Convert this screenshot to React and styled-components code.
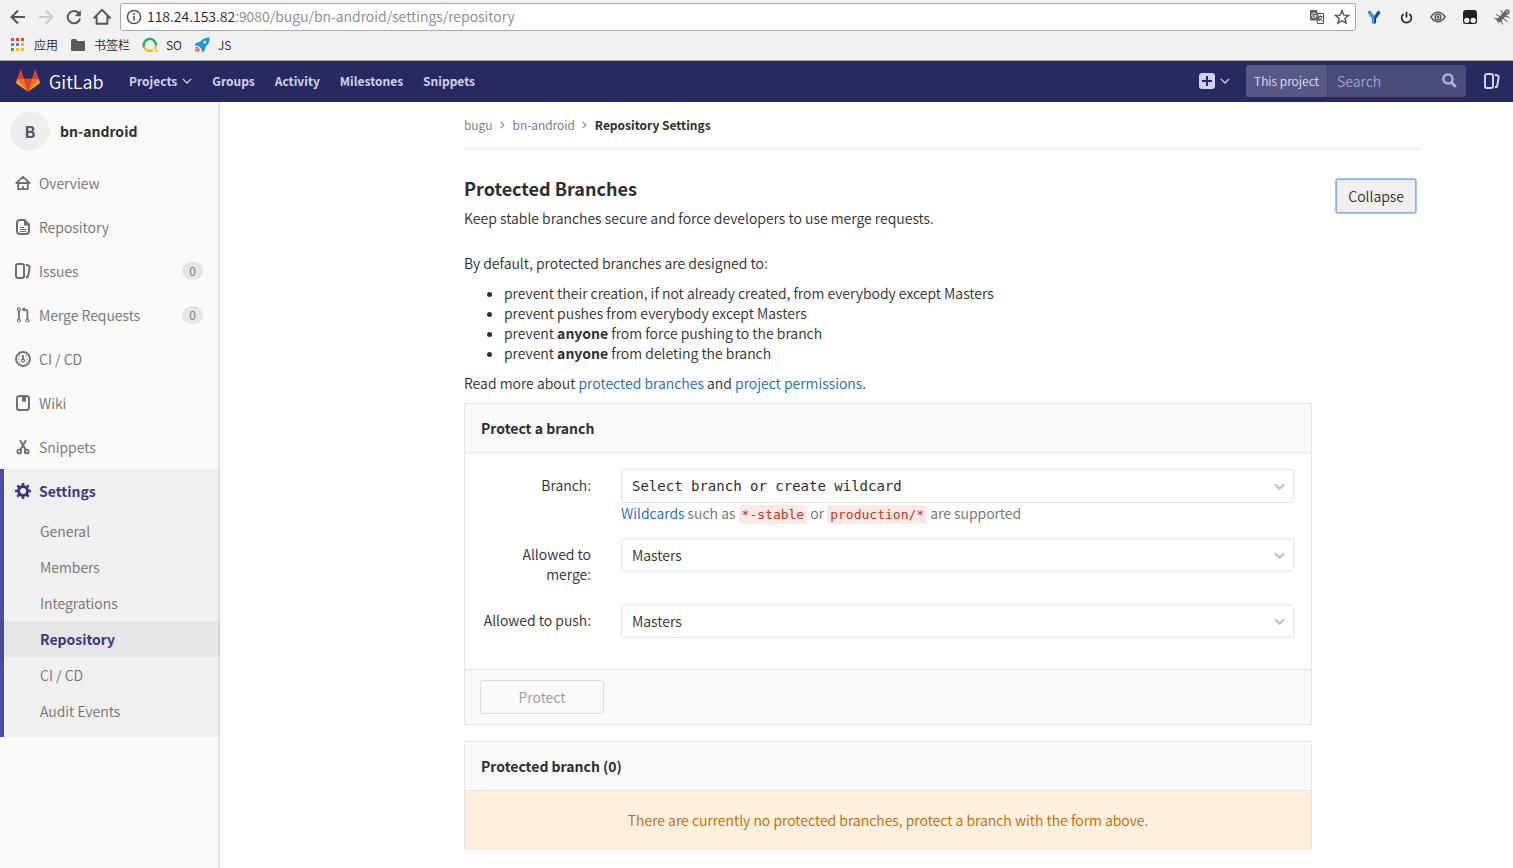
import React from 'react';
import styled, { createGlobalStyle } from 'styled-components';

const GlobalStyle = createGlobalStyle`
  *, *::before, *::after { box-sizing: border-box; }
  body {
    margin: 0;
    background: #fff;
    color: #2e2e2e;
    font-family: "Noto Sans CJK SC", "Noto Sans", sans-serif;
    font-size: 14px;
    font-weight: 350;
    line-height: 20px;
  }
  a { color: #1b69b6; text-decoration: none; }
  button, input, select { font: inherit; color: inherit; margin: 0; }
  strong { font-weight: 700; }
  svg { display: block; flex: none; }
`;

const Page = styled.div`
  min-height: 100vh;
  display: flex;
  flex-direction: column;
`;

/* ---------- browser bars ---------- */

const BrowserChrome = styled.div`
  background: #f1f1f1;
  border-bottom: 1px solid #aaa;
`;

const Toolbar = styled.div`
  display: flex;
  align-items: center;
  height: 34px;
  padding-left: 4px;
`;

const ToolButton = styled.button`
  display: flex;
  align-items: center;
  justify-content: center;
  width: 28px;
  height: 28px;
  padding: 0;
  border: 0;
  background: none;
  color: ${(p) => (p.$faded ? '#ccc' : '#555')};
`;

const NavButtons = styled.div`
  display: flex;
`;

const AddressBar = styled.div`
  flex: 1;
  display: flex;
  align-items: center;
  gap: 5px;
  height: 28px;
  margin-left: 4px;
  padding: 0 5px;
  border: 1px solid #a8a8a8;
  border-radius: 3px;
  background: #fff;
  color: #555;
`;

const Address = styled.div`
  flex: 1;
  padding-bottom: 2px;
  color: #888;
  line-height: 24px;
`;

const Host = styled.span`
  color: #222;
`;

const AddressIcons = styled.div`
  display: flex;
  gap: 9px;
`;

const Extensions = styled.div`
  display: flex;
  gap: 4px;
  padding-left: 4px;
  margin-right: -3px;
`;

const Bookmarks = styled.div`
  display: flex;
  align-items: center;
  height: 26px;
  padding: 0 10px 4px;
  gap: 12px;
`;

const Bookmark = styled.a`
  display: flex;
  align-items: center;
  gap: 8px;
  color: #222;
  font-size: 12px;
`;

/* ---------- application header ---------- */

const Header = styled.header`
  display: flex;
  align-items: center;
  height: 41px;
  padding: 0 13px 2px 16px;
  background: #292961;
  color: #d1d1f0;
`;

const Brand = styled.a`
  display: flex;
  align-items: center;
  gap: 9px;
  width: 113px;
  color: #fff;
  font-size: 18px;
`;

const MainNav = styled.nav`
  flex: 1;
  display: flex;
  gap: 20px;
`;

const NavLink = styled.a`
  display: flex;
  align-items: center;
  gap: 5px;
  color: #d1d1f0;
  font-size: 12px;
  font-weight: 700;
`;

const NewButton = styled.button`
  display: flex;
  align-items: center;
  gap: 5px;
  padding: 0;
  border: 0;
  background: none;
  margin-right: 16px;
`;

const SearchForm = styled.form`
  display: flex;
  align-items: center;
  width: 220px;
  height: 32px;
  padding-right: 9px;
  border-radius: 3px;
  overflow: hidden;
  background: #4b4b7c;
`;

const SearchScope = styled.label`
  width: 82px;
  padding-left: 8px;
  border-right: 1px solid #44447a;
  background: #585887;
  color: #e0e0f5;
  font-size: 12px;
  line-height: 32px;
  white-space: nowrap;
`;

const SearchInput = styled.input`
  flex: 1;
  min-width: 0;
  height: 32px;
  padding: 0 9px;
  border: 0;
  outline: 0;
  background: transparent;
  &::placeholder { color: #a6a6cd; opacity: 1; }
`;

const HeaderLink = styled.a`
  margin-left: 18px;
  color: #d1d1f0;
`;

/* ---------- sidebar ---------- */

const Body = styled.div`
  flex: 1;
  display: flex;
`;

const Sidebar = styled.aside`
  flex: none;
  width: 220px;
  background: #fafafa;
  box-shadow: inset -2px 0 0 #e5e5e5;
`;

const ProjectLink = styled.a`
  display: flex;
  align-items: center;
  gap: 10px;
  height: 59px;
  padding: 0 10px 2px;
  color: #2e2e2e;
  font-weight: 700;
`;

const Avatar = styled.span`
  width: 40px;
  height: 40px;
  border: 1px solid #f3f3f3;
  border-radius: 50%;
  background: #eee;
  color: #555;
  font-size: 16px;
  line-height: 38px;
  text-align: center;
`;

const MenuList = styled.ul`
  list-style: none;
  margin: 0;
  padding: 0;
`;

const MenuItem = styled.li`
  ${(p) => p.$active && `
    padding-bottom: 8px;
    background: rgba(0, 0, 0, 0.04);
    box-shadow: inset 4px 0 0 #4b4ba3;
  `}
`;

const MenuLink = styled.a`
  display: flex;
  align-items: center;
  gap: 8px;
  height: 44px;
  padding: 0 17px 0 15px;
  color: ${(p) => (p.$active ? '#393982' : '#707070')};
  font-weight: ${(p) => (p.$active ? 700 : 350)};
`;

const MenuText = styled.span`
  flex: 1;
`;

const Count = styled.span`
  width: 21px;
  border-radius: 9px;
  background: #e6e6e6;
  font-size: 12px;
  line-height: 18px;
  text-align: center;
`;

const SubLink = styled.a`
  display: block;
  padding-left: 40px;
  line-height: 36px;
  color: ${(p) => (p.$active ? '#393982' : '#707070')};
  font-weight: ${(p) => (p.$active ? 700 : 350)};
  background: ${(p) => (p.$active ? 'rgba(0, 0, 0, 0.04)' : 'none')};
`;

/* ---------- content ---------- */

const Main = styled.main`
  flex: 1;
  min-width: 0;
  padding: 0 92px 18px 244px;
`;

const Breadcrumbs = styled.nav`
  display: flex;
  align-items: center;
  gap: 7px;
  height: 47px;
  border-bottom: 1px solid #e5e5e5;
  font-size: 12px;
`;

const Crumb = styled.a`
  color: ${(p) => (p.$current ? '#2e2e2e' : '#707070')};
  font-weight: ${(p) => (p.$current ? 700 : 350)};
`;

const SectionHeader = styled.div`
  display: flex;
  justify-content: space-between;
  align-items: flex-start;
  padding: 26px 5px 0 0;
`;

const Title = styled.h4`
  margin: 0 0 7px;
  font-size: 18px;
  line-height: 26px;
`;

const Paragraph = styled.p`
  margin: 0 0 10px;
`;

const CollapseButton = styled.button`
  height: 34px;
  margin-top: 4px;
  padding: 0 11px;
  border: 1px solid #86aef0;
  border-radius: 2px;
  background: #f0f0f0;
  box-shadow: 0 0 0 1px #a3c4fb;
`;

const SectionContent = styled.div`
  max-width: 848px;
  margin-top: 15px;
`;

const Rules = styled.ul`
  margin: 0 0 10px;
  padding-left: 40px;
`;

const Panel = styled.section`
  margin-bottom: 16px;
  border: 1px solid #e5e5e5;
  border-radius: 2px;
`;

const PanelTitle = styled.h5`
  margin: 0;
  padding: 14px 16px;
  border-bottom: 1px solid #e5e5e5;
  background: #fafafa;
  font-size: 14px;
  line-height: 20px;
`;

const PanelBody = styled.div`
  padding: 16px 17px 16px 16px;
`;

const FormRow = styled.div`
  display: grid;
  grid-template-columns: 110px 1fr;
  column-gap: 30px;
  margin-bottom: 15px;
`;

const Label = styled.label`
  padding: 6px 0 5px;
  text-align: right;
`;

const SelectWrap = styled.div`
  position: relative;
`;

const Select = styled.select`
  appearance: none;
  display: block;
  width: 100%;
  height: 34px;
  padding: 0 24px 0 10px;
  border: 1px solid #e5e5e5;
  border-radius: 3px;
  background: #fff;
  ${(p) => p.$mono && 'font-family: "DejaVu Sans Mono", monospace;'}
`;

const SelectArrow = styled.svg`
  position: absolute;
  right: 9px;
  top: 14px;
  pointer-events: none;
`;

const Help = styled.div`
  color: #707070;
`;

const Code = styled.code`
  padding: 2px 3px;
  border-radius: 3px;
  background: #fbe9e7;
  color: #c0341d;
  font-family: "DejaVu Sans Mono", monospace;
  font-size: 13px;
  line-height: 1;
`;

const PanelFooter = styled.div`
  padding: 10px 15px;
  border-top: 1px solid #e5e5e5;
  background: #fafafa;
`;

const ProtectButton = styled.button`
  display: block;
  width: 124px;
  height: 34px;
  border: 1px solid #dcdcdc;
  border-radius: 3px;
  background: #fafafa;
  color: #999;
`;

const EmptyMessage = styled.p`
  margin: 0;
  padding: 19px 16px;
  background: #fff0de;
  color: #c26700;
  text-align: center;
`;

/* ---------- icons ---------- */

const Icon = ({ size = 16, children, ...rest }) => (
  <svg width={size} height={size} viewBox="0 0 16 16" fill="none" stroke="currentColor" strokeWidth="2" aria-hidden="true" {...rest}>
    {children}
  </svg>
);

const Chevron = () => (
  <svg width="10" height="6" viewBox="0 0 10 6" fill="none" stroke="currentColor" strokeWidth="1.3" aria-hidden="true">
    <path d="M.8.9 5 5 9.2.9" />
  </svg>
);

const CrumbArrow = () => (
  <svg width="6" height="8" viewBox="0 0 6 8" fill="none" stroke="#888" strokeWidth="1.1" aria-hidden="true">
    <path d="M.6.8 4 4 .6 7.2" />
  </svg>
);

const IssuesIcon = () => (
  <Icon fill="currentColor" stroke="none">
    <path d="M10.458 15.012l.311.055a3 3 0 0 0 3.476-2.433l1.389-7.879A3 3 0 0 0 13.2 1.28L11.23.933a3.002 3.002 0 0 0-.824-.031c.364.59.58 1.28.593 2.02l1.854.328a1 1 0 0 1 .811 1.158l-1.389 7.879a1 1 0 0 1-1.158.81l-.118-.02a3.98 3.98 0 0 1-.541 1.935zM3 0h4a3 3 0 0 1 3 3v10a3 3 0 0 1-3 3H3a3 3 0 0 1-3-3V3a3 3 0 0 1 3-3zm0 2a1 1 0 0 0-1 1v10a1 1 0 0 0 1 1h4a1 1 0 0 0 1-1V3a1 1 0 0 0-1-1H3z" />
  </Icon>
);

const HomeIcon = () => (
  <Icon strokeWidth="1.8" strokeLinejoin="round" strokeLinecap="round">
    <path d="M1.3 8 8 1.8 14.7 8zM3.2 8v6.2h9.6V8" />
    <path d="M8 11.3v2.4" strokeWidth="2" strokeLinecap="butt" />
  </Icon>
);

const DocIcon = () => (
  <Icon>
    <path d="M9.5 1H5a3 3 0 0 0-3 3v8a3 3 0 0 0 3 3h6a3 3 0 0 0 3-3V5.5z" strokeLinejoin="round" />
    <path d="M9 1v5.5h5z" fill="currentColor" stroke="none" />
    <path d="M5 8.5h4M5 10.5h6M5 12.5h6" strokeWidth="1" />
  </Icon>
);

const MergeIcon = () => (
  <Icon strokeWidth="1.2">
    <circle cx="3.9" cy="2.4" r="1.5" />
    <circle cx="3.9" cy="13.5" r="1.5" />
    <circle cx="12.4" cy="13.5" r="1.5" />
    <path d="M3.9 4v8" strokeWidth="1.8" />
    <path d="M9 2.6h1.4a2 2 0 0 1 2 2V12" strokeWidth="1.8" />
    <path d="M9.6 0v5L6.6 2.5z" fill="currentColor" stroke="none" />
  </Icon>
);

const PipelineIcon = () => (
  <Icon strokeWidth="1.8">
    <circle cx="8" cy="8" r="7" />
    <circle cx="8" cy="9.6" r="1.5" strokeWidth="1.2" />
    <path d="M8 4v4" strokeWidth="1.8" />
    <path d="M3 8h1.2M11.8 8H13M4.400 4.400l.9.9M11.600 4.400l-.9.9M4.400 11.600l.8-.8M11.600 11.600l-.8-.8" strokeWidth="1.1" />
  </Icon>
);

const WikiIcon = () => (
  <Icon>
    <rect x="2" y="1" width="12" height="14" rx="2.6" />
    <path d="M7 1.5h4v6L9 6 7 7.5z" fill="currentColor" stroke="none" />
  </Icon>
);

const SnippetIcon = () => (
  <Icon strokeWidth="1.9">
    <circle cx="4.3" cy="12.5" r="1.9" />
    <circle cx="11.7" cy="12.5" r="1.9" />
    <path d="M5 1.2 10.8 11M11 1.2 5.2 11" />
  </Icon>
);

const GearIcon = () => (
  <Icon>
    <circle cx="8" cy="8" r="4.5" strokeWidth="3" />
    <path d="M8 0v3M8 13v3M0 8h3M13 8h3M2.3 2.3l2 2M11.7 11.7l2 2M2.3 13.7l2-2M11.7 4.3l2-2" strokeWidth="2.6" />
  </Icon>
);

const Logo = () => (
  <svg width="24" height="23" viewBox="0 0 36 34" aria-hidden="true">
    <path fill="#e24329" d="M2 14 6.7 1q.5-1.2 1 0L12 14zM34 14 29.3 1q-.5-1.2-1 0L24 14z" />
    <path fill="#e24329" d="M18 34 12 14h12z" />
    <path fill="#fc6d26" d="M18 34 12 14H2zM18 34l6-20h10z" />
    <path fill="#fca326" d="M2 14 .2 19.5q-.3 1.3.8 2.2L18 34zM34 14l1.8 5.5q.3 1.3-.8 2.2L18 34z" />
  </svg>
);

const PlusIcon = () => (
  <svg width="16" height="16" viewBox="0 0 16 16" aria-hidden="true">
    <rect width="16" height="16" rx="3" fill="#d1d1f0" />
    <path d="M8 3v10M3 8h10" stroke="#292961" strokeWidth="2" />
  </svg>
);

const SearchIcon = () => (
  <Icon size={15} color="#b4b4d8" strokeWidth="2.4">
    <circle cx="6.3" cy="6.3" r="4.9" />
    <path d="m9.8 9.8 5 5" strokeWidth="3" />
  </Icon>
);

const InfoIcon = () => (
  <Icon strokeWidth="1.5">
    <circle cx="8" cy="8" r="6.6" />
    <path d="M8 7v4.5M8 4.3v1.7" strokeWidth="1.7" />
  </Icon>
);

const TranslateIcon = () => (
  <Icon strokeWidth="1">
    <path d="M7 4.5h7.5v10H8.5z" />
    <path d="M1 1h7l3 10.5H1z" fill="#666" stroke="none" />
    <path d="M7 5.2a2.2 2.2 0 1 0 .3 1.5H5.2" stroke="#fff" />
    <path d="M9.5 7.5h4M11.5 6.5v1M13 7.5q-.5 3-3 4.5M10.3 8.5q1 2.5 3 3.5" />
  </Icon>
);

const StarIcon = () => (
  <Icon strokeWidth="1.4">
    <path d="m8 1.6 1.8 4.5 4.8.3-3.7 3.1 1.2 4.8L8 11.7l-4.1 2.6 1.2-4.8-3.7-3.1 4.8-.3z" />
  </Icon>
);

const AppsIcon = () => {
  const colors = ['#ea4335', '#ea4335', '#ea4335', '#34a853', '#4285f4', '#fbbc05', '#34a853', '#fbbc05', '#fbbc05'];
  return (
    <svg width="16" height="14" viewBox="0 0 16 14" aria-hidden="true">
      {colors.map((c, i) => (
        <rect key={i} x={(i % 3) * 5 + 1} y={Math.floor(i / 3) * 5} width="3" height="3" fill={c} />
      ))}
    </svg>
  );
};

const FolderIcon = () => (
  <svg width="16" height="14" viewBox="0 0 16 14" aria-hidden="true">
    <path d="M1 2.5Q1 1 2.5 1H6l1.5 2H14q1 0 1 1v8q0 1-1 1H2q-1 0-1-1z" fill="#5a5a5a" />
  </svg>
);

const RingIcon = () => (
  <svg width="16" height="16" viewBox="0 0 16 16" fill="none" strokeWidth="2.4" aria-hidden="true">
    <path d="M1.9 10A6.2 6.2 0 1 1 14 8.5" stroke="#1fb259" />
    <path d="M1.9 10A6.2 6.2 0 0 0 11 13M14 8.5A6.2 6.2 0 0 1 12.5 12" stroke="#f6b92b" />
    <circle cx="14.5" cy="14" r="1.2" fill="#f6b92b" />
  </svg>
);

const RocketIcon = () => (
  <svg width="16" height="16" viewBox="0 0 17 16" aria-hidden="true">
    <path d="M16.5 0Q10 0 6.5 4.5L2.5 5.5.5 8.5l4 .2 3.5 3.5.2 3.8 3-2 1-4Q17 6 16.5 0z" fill="#1c96dc" />
    <circle cx="11.5" cy="5" r="1.5" fill="#d9f1ff" />
    <path d="M1.5 11.5 4 10M1 14.5l4-3M3.5 15.5 6 12.5" stroke="#e8604c" strokeWidth="1.5" />
  </svg>
);

const FunnelIcon = () => (
  <Icon stroke="none">
    <path d="M1.5 3 4 1.5 8 7l4-5.5L14.5 3 10 9.5V14l-2 1-2-1V9.5z" fill="#1668c4" />
    <path d="M3.5 3 7.300 8.800v5.200" stroke="#58b4f5" strokeWidth="1.3" />
    <path d="M13.500 3.500 9.400 9.300v4.700" stroke="#0b3567" strokeWidth="1.3" />
  </Icon>
);

const PowerIcon = () => (
  <Icon size={13} color="#222" strokeWidth="2">
    <path d="M4.5 3.5a6 6 0 1 0 7 0M8 1v7" />
  </Icon>
);

const EyeIcon = () => (
  <Icon strokeWidth="1.3">
    <path d="M.8 8Q8-1.500 15.200 8 8 17.500.8 8z" />
    <circle cx="8" cy="8" r="2.900" />
    <circle cx="8" cy="8" r=".8" fill="currentColor" />
  </Icon>
);

const MonkeyIcon = () => (
  <Icon stroke="none">
    <rect x="1" y="1" width="14" height="14" rx="3" fill="#222" />
    <circle cx="4.8" cy="11.3" r="2.6" fill="#fff" />
    <circle cx="11.2" cy="11.3" r="2.6" fill="#fff" />
  </Icon>
);

const BugIcon = () => (
  <Icon strokeWidth="1">
    <path d="M3.5 12.5 12 4" strokeWidth="4" stroke="#666" />
    <circle cx="13" cy="3" r="2.2" fill="#999" stroke="#555" />
    <path d="M7 8 2 5.5M9 6 7 1M5 10 .5 9.5M9 9l4.5 4M11 7l4.5 1.5M7 11l1.5 4.5" stroke="#555" />
  </Icon>
);

/* ---------- data ---------- */

const menu = [
  { text: 'Overview', icon: <HomeIcon /> },
  { text: 'Repository', icon: <DocIcon /> },
  { text: 'Issues', icon: <IssuesIcon />, count: 0 },
  { text: 'Merge Requests', icon: <MergeIcon />, count: 0 },
  { text: 'CI / CD', icon: <PipelineIcon /> },
  { text: 'Wiki', icon: <WikiIcon /> },
  { text: 'Snippets', icon: <SnippetIcon /> },
  {
    text: 'Settings',
    icon: <GearIcon />,
    active: true,
    children: ['General', 'Members', 'Integrations', 'Repository', 'CI / CD', 'Audit Events'],
  },
];

const DropDown = ({ id, value, mono }) => (
  <SelectWrap>
    <Select id={id} $mono={mono} defaultValue={value}>
      <option>{value}</option>
    </Select>
    <SelectArrow width="11" height="8" viewBox="0 0 11 8" fill="none" stroke="#c4c4c4" strokeWidth="2.4" aria-hidden="true">
      <path d="M.9 1.3 5.5 5.7 10.1 1.3" />
    </SelectArrow>
  </SelectWrap>
);

export default function App() {
  return (
    <Page>
      <GlobalStyle />
      <BrowserChrome>
        <Toolbar>
          <NavButtons>
            <ToolButton aria-label="Back">
              <Icon><path d="M15 8H2M8 1.5 1.5 8 8 14.5" /></Icon>
            </ToolButton>
            <ToolButton aria-label="Forward" $faded>
              <Icon><path d="M1 8h13M8 1.5 14.5 8 8 14.5" /></Icon>
            </ToolButton>
            <ToolButton aria-label="Reload">
              <Icon>
                <path d="M13 4.5A6.2 6.2 0 1 0 14 9.5" />
                <path d="M14.8 1v6.2H8.6z" fill="currentColor" stroke="none" />
              </Icon>
            </ToolButton>
            <ToolButton aria-label="Home">
              <Icon size={18}><path d="M1.2 8.5 8 1.7l6.8 6.8h-2V14H3.2V8.5z" strokeWidth="1.7" /></Icon>
            </ToolButton>
          </NavButtons>
          <AddressBar>
            <InfoIcon />
            <Address><Host>118.24.153.82</Host>:9080/bugu/bn-android/settings/repository</Address>
            <AddressIcons>
              <TranslateIcon />
              <StarIcon />
            </AddressIcons>
          </AddressBar>
          <Extensions>
            <ToolButton aria-label="Filter"><FunnelIcon /></ToolButton>
            <ToolButton aria-label="Power"><PowerIcon /></ToolButton>
            <ToolButton aria-label="View"><EyeIcon /></ToolButton>
            <ToolButton aria-label="Scripts"><MonkeyIcon /></ToolButton>
            <ToolButton aria-label="Debug"><BugIcon /></ToolButton>
          </Extensions>
        </Toolbar>
        <Bookmarks>
          <Bookmark href="#"><AppsIcon />应用</Bookmark>
          <Bookmark href="#"><FolderIcon />书签栏</Bookmark>
          <Bookmark href="#"><RingIcon />SO</Bookmark>
          <Bookmark href="#"><RocketIcon />JS</Bookmark>
        </Bookmarks>
      </BrowserChrome>

      <Header>
        <Brand href="#"><Logo />GitLab</Brand>
        <MainNav>
          <NavLink href="#">Projects<Chevron /></NavLink>
          <NavLink href="#">Groups</NavLink>
          <NavLink href="#">Activity</NavLink>
          <NavLink href="#">Milestones</NavLink>
          <NavLink href="#">Snippets</NavLink>
        </MainNav>
        <NewButton aria-label="New"><PlusIcon /><Chevron /></NewButton>
        <SearchForm>
          <SearchScope htmlFor="search">This project</SearchScope>
          <SearchInput id="search" placeholder="Search" />
          <SearchIcon />
        </SearchForm>
        <HeaderLink href="#" aria-label="Issues"><IssuesIcon /></HeaderLink>
      </Header>

      <Body>
        <Sidebar>
          <ProjectLink href="#"><Avatar>B</Avatar>bn-android</ProjectLink>
          <MenuList>
            {menu.map((item) => (
              <MenuItem key={item.text} $active={item.active}>
                <MenuLink href="#" $active={item.active}>
                  {item.icon}
                  <MenuText>{item.text}</MenuText>
                  {item.count !== undefined && <Count>{item.count}</Count>}
                </MenuLink>
                {item.children && (
                  <MenuList>
                    {item.children.map((child) => (
                      <li key={child}>
                        <SubLink href="#" $active={child === 'Repository'}>{child}</SubLink>
                      </li>
                    ))}
                  </MenuList>
                )}
              </MenuItem>
            ))}
          </MenuList>
        </Sidebar>

        <Main>
          <Breadcrumbs>
            <Crumb href="#">bugu</Crumb>
            <CrumbArrow />
            <Crumb href="#">bn-android</Crumb>
            <CrumbArrow />
            <Crumb href="#" $current>Repository Settings</Crumb>
          </Breadcrumbs>

          <SectionHeader>
            <div>
              <Title>Protected Branches</Title>
              <Paragraph>Keep stable branches secure and force developers to use merge requests.</Paragraph>
            </div>
            <CollapseButton>Collapse</CollapseButton>
          </SectionHeader>

          <SectionContent>
            <Paragraph>By default, protected branches are designed to:</Paragraph>
            <Rules>
              <li>prevent their creation, if not already created, from everybody except Masters</li>
              <li>prevent pushes from everybody except Masters</li>
              <li>prevent <strong>anyone</strong> from force pushing to the branch</li>
              <li>prevent <strong>anyone</strong> from deleting the branch</li>
            </Rules>
            <Paragraph>
              Read more about <a href="#">protected branches</a> and <a href="#">project permissions</a>.
            </Paragraph>

            <Panel>
              <PanelTitle>Protect a branch</PanelTitle>
              <PanelBody>
                <FormRow>
                  <Label htmlFor="branch">Branch:</Label>
                  <div>
                    <DropDown id="branch" value="Select branch or create wildcard" mono />
                    <Help>
                      <a href="#">Wildcards</a> such as <Code>*-stable</Code> or <Code>production/*</Code> are supported
                    </Help>
                  </div>
                </FormRow>
                <FormRow>
                  <Label htmlFor="merge">Allowed to merge:</Label>
                  <DropDown id="merge" value="Masters" />
                </FormRow>
                <FormRow>
                  <Label htmlFor="push">Allowed to push:</Label>
                  <DropDown id="push" value="Masters" />
                </FormRow>
              </PanelBody>
              <PanelFooter>
                <ProtectButton disabled>Protect</ProtectButton>
              </PanelFooter>
            </Panel>

            <Panel>
              <PanelTitle>Protected branch (0)</PanelTitle>
              <EmptyMessage>There are currently no protected branches, protect a branch with the form above.</EmptyMessage>
            </Panel>
          </SectionContent>
        </Main>
      </Body>
    </Page>
  );
}
